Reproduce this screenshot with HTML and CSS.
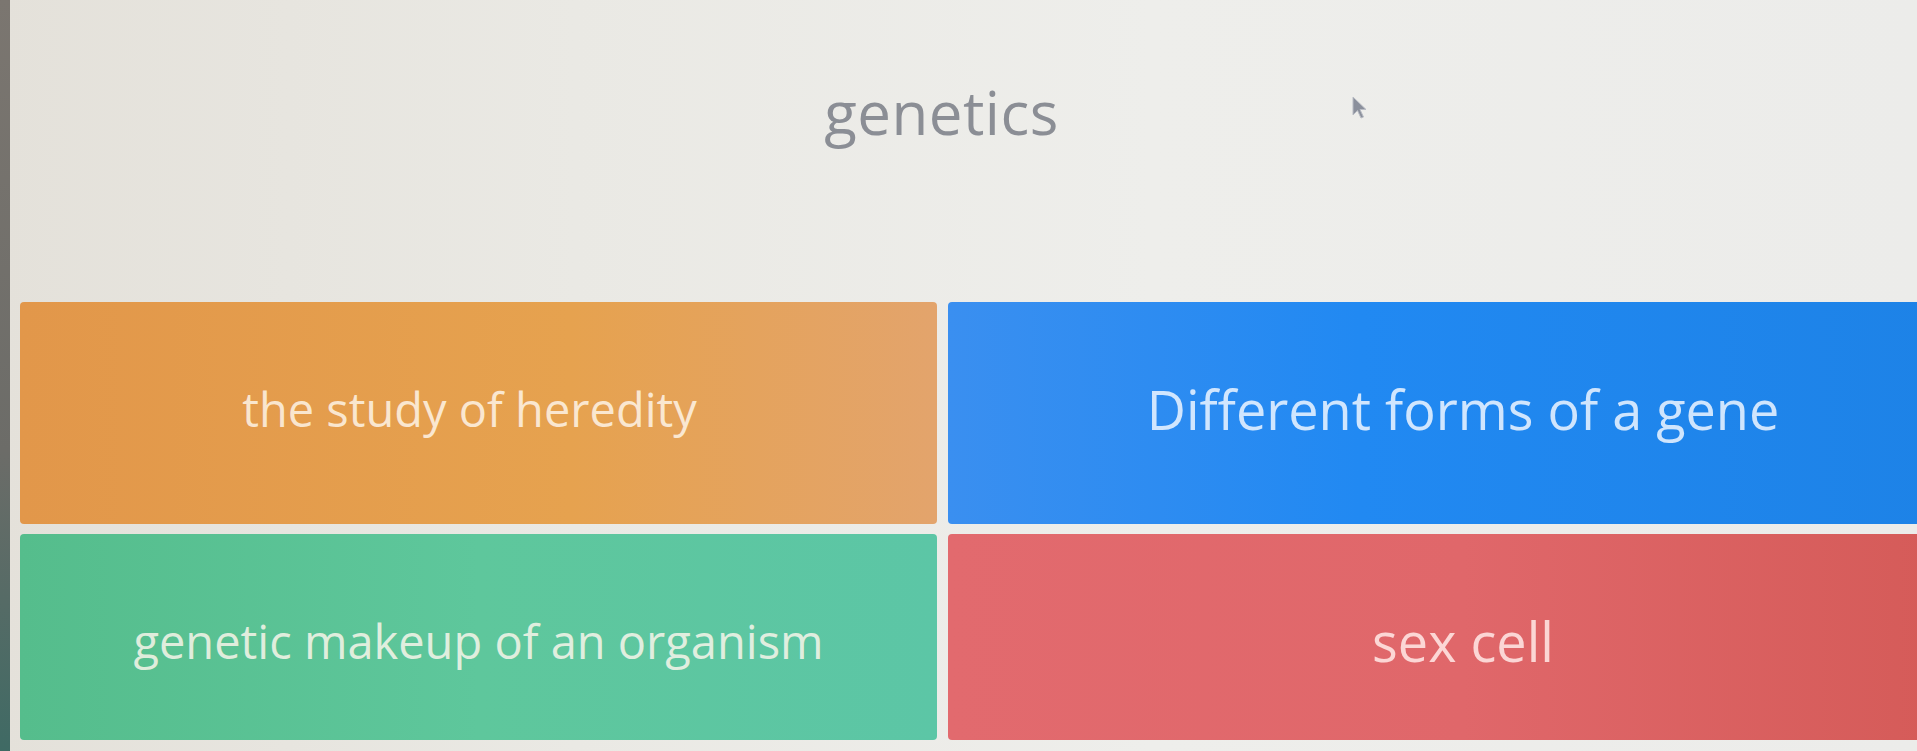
FILE: index.html
```html
<!DOCTYPE html>
<html lang="en">
<head>
  <meta charset="UTF-8">
  <title>Match – genetics</title>
  <meta name="viewport" content="width=device-width, initial-scale=1.0">
  <link rel="stylesheet" href="styles.css">
</head>
<body>
  <div class="page">
    <div class="edge"></div>

    <div class="main">
      <div class="term">
        <span class="term-text">genetics</span>
      </div>

      <div class="answer-grid">
        <div class="answer orange left">the study of heredity</div>
        <div class="answer blue right">Different forms of a gene</div>
        <div class="answer green left lower">genetic makeup of an organism</div>
        <div class="answer red right lower">sex cell</div>
      </div>
    </div>
  </div>

  <!-- mouse pointer -->
  <svg class="pointer" width="16" height="24" viewBox="0 0 16 24">
    <path d="M1 1 L1 19 L5.5 14.5 L9 22 L11.5 21 L8 13.5 L14 13.5 Z" fill="#8b909c" stroke="#b9bcc4" stroke-width="1"/>
  </svg>
</body>
</html>
```

FILE: styles.css
```css
html, body {
  margin: 0;
  padding: 0;
  height: 100%;
  overflow: hidden;
}
body {
  font-family: "Open Sans", "Noto Sans", sans-serif;
  background: linear-gradient(90deg, #e4e1da 0%, #eae9e4 30%, #eeeeeb 60%, #ececea 100%);
}
.page {
  display: flex;
  height: 100%;
}
.edge {
  flex: 0 0 10px;
  background: linear-gradient(180deg, #7b7670 0%, #6c6c68 60%, #3f6a64 100%);
}
.main {
  flex: 1;
  min-width: 0;
  overflow: hidden;
}
.term {
  height: 302px;
  box-sizing: border-box;
  padding: 76px 44px 0 0;
  text-align: center;
}
.term-text {
  font-size: 60px;
  line-height: 72px;
  color: #8b8e95;
  letter-spacing: 0.5px;
}
.answer-grid {
  display: grid;
  grid-template-columns: 917px 1030px;
  grid-template-rows: 222px 206px;
  gap: 10px 11px;
  padding-left: 10px;
}
.answer {
  display: flex;
  align-items: center;
  justify-content: center;
  border-radius: 4px;
  color: rgba(255, 248, 238, 0.82);
  line-height: 1.2;
  padding-bottom: 8px;
  box-sizing: border-box;
}
.answer.lower {
  padding: 8px 0 0;
}
.left {
  font-size: 47px;
  padding-right: 18px;
}
.right {
  font-size: 54px;
}
.orange {
  background: linear-gradient(90deg, #e2974a 0%, #e6a24f 60%, #e3a46c 100%);
}
.blue {
  background: linear-gradient(90deg, #3a8ff0 0%, #2189f2 40%, #1d82e6 100%);
  color: rgba(232, 242, 255, 0.88);
}
.green {
  background: linear-gradient(90deg, #55bd8c 0%, #5ec79c 50%, #5cc6a6 100%);
}
.red {
  background: linear-gradient(90deg, #e26a6e 0%, #e0676a 50%, #d45a57 100%);
  color: rgba(255, 230, 228, 0.88);
}
.pointer {
  position: absolute;
  left: 1352px;
  top: 96px;
}
```
